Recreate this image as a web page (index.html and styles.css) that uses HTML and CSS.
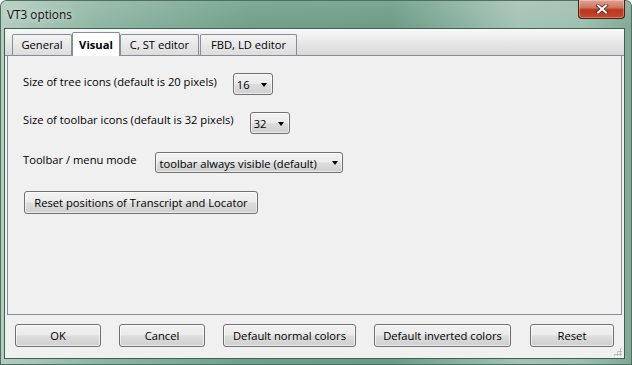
FILE: index.html
```html
<!DOCTYPE html>
<html lang="en">
<head>
    <meta charset="UTF-8">
    <title>VT3 options</title>
    <link rel="stylesheet" href="styles.css">
</head>
<body>
    <div class="window">
        <div class="titlebar">
            <span class="title">VT3 options</span>
            <div class="close">
                <svg width="14" height="10" viewBox="0 0 14 10">
                    <path d="M3 1.5 L11 8.5 M11 1.5 L3 8.5" stroke="#4a2a22" stroke-width="3.6" stroke-linecap="square"/>
                    <path d="M3 1.5 L11 8.5 M11 1.5 L3 8.5" stroke="#ffffff" stroke-width="2" stroke-linecap="square"/>
                </svg>
            </div>
        </div>
        <div class="client">
            <div class="tabstrip">
                <div class="tab tab-general">General</div>
                <div class="tab tab-visual active">Visual</div>
                <div class="tab tab-cst">C, ST editor</div>
                <div class="tab tab-fbd">FBD, LD editor</div>
            </div>
            <div class="panel">
                <div class="row row-tree">
                    <span class="label">Size of tree icons (default is 20 pixels)</span>
                    <div class="combo combo-small"><span>16</span><i class="arrow"></i></div>
                </div>
                <div class="row row-toolbar">
                    <span class="label">Size of toolbar icons (default is 32 pixels)</span>
                    <div class="combo combo-small"><span>32</span><i class="arrow"></i></div>
                </div>
                <div class="row row-mode">
                    <span class="label">Toolbar / menu mode</span>
                    <div class="combo combo-wide"><span>toolbar always visible (default)</span><i class="arrow"></i></div>
                </div>
                <div class="row row-reset">
                    <button class="btn btn-positions">Reset positions of Transcript and Locator</button>
                </div>
            </div>
            <div class="footer">
                <button class="btn btn-ok">OK</button>
                <button class="btn btn-cancel">Cancel</button>
                <button class="btn btn-normal">Default normal colors</button>
                <button class="btn btn-inverted">Default inverted colors</button>
                <button class="btn btn-reset">Reset</button>
                <div class="grip"></div>
            </div>
        </div>
    </div>
</body>
</html>
```

FILE: styles.css
```css
* {
    box-sizing: border-box;
}

html, body {
    margin: 0;
    padding: 0;
    height: 100%;
    overflow: hidden;
}

body {
    font-family: "Open Sans", "Liberation Sans", sans-serif;
    font-size: 11.2px;
    color: #000;
}

.window {
    height: 365px;
    width: 632px;
    padding: 0 7px 6px 4px;
    display: flex;
    flex-direction: column;
    background:
        linear-gradient(180deg, rgba(255, 255, 255, 0.12), rgba(255, 255, 255, 0) 30px),
        linear-gradient(90deg, #b3cdc0 0%, #8fb6a3 15%, #6e9f89 40%, #6a9b85 62%, #a3c3b4 82%, #9dbfae 92%, #7ea895 100%);
    border-radius: 6px 6px 0 0;
    box-shadow: inset 0 0 0 1px #4f6f61;
    position: relative;
}

.titlebar {
    flex: 0 0 28px;
    display: flex;
    align-items: center;
}

.title {
    font-size: 11.8px;
    margin-left: 3px;
    color: #111;
    text-shadow: 0 0 6px rgba(255, 255, 255, 0.8);
}

.close {
    position: absolute;
    top: 0;
    right: 7px;
    width: 47px;
    height: 19px;
    border: 1px solid #4a1d14;
    border-top: none;
    border-radius: 0 0 4px 4px;
    background: linear-gradient(#e2a292 0%, #d07966 40%, #b9361e 55%, #c5482f 100%);
    display: flex;
    align-items: center;
    justify-content: center;
    box-shadow: inset 0 0 0 1px rgba(255, 255, 255, 0.3);
}

.client {
    flex: 1;
    background: #f0f0f0;
    border: 1px solid #41604f;
    padding: 0 2px;
    display: flex;
    flex-direction: column;
    position: relative;
}

.tabstrip {
    flex: 0 0 27px;
    display: flex;
    align-items: flex-end;
    background: linear-gradient(#f8f8f8, #d8d8d8);
    margin: 0 -2px;
    padding-left: 7px;
    border-bottom: 1px solid #898c95;
}

.tab {
    height: 21px;
    border: 1px solid #898c95;
    border-bottom: none;
    border-radius: 2px 2px 0 0;
    background: linear-gradient(#f3f3f3, #dcdcdc);
    padding-top: 2px;
    text-align: center;
    margin-right: 1px;
}

.tab-general { width: 60px; }
.tab-cst { width: 79px; }
.tab-fbd { width: 97px; }

.tab.active {
    width: 48px;
    height: 24px;
    margin-bottom: -1px;
    margin-left: -1px;
    margin-right: 0;
    background: #fff;
    font-weight: bold;
    padding-top: 4px;
}

.panel {
    flex: 0 0 259px;
    border: 1px solid #898c95;
    border-top: none;
    display: flex;
    flex-direction: column;
    padding: 17px 0 0 15px;
}

.row {
    display: flex;
    gap: 16px;
    align-items: flex-start;
}

.label {
    padding-top: 1px;
}

.row-toolbar { margin-top: 17px; }
.row-toolbar .label { padding-top: 0; }
.row-mode { margin-top: 18px; gap: 19px; }
.row-mode .label { padding-top: 0; }
.row-reset { margin-top: 18px; }

.combo {
    height: 22px;
    border: 1px solid #707070;
    border-radius: 3px;
    background: linear-gradient(#f2f2f2 0%, #ebebeb 48%, #dddddd 52%, #cfcfcf 100%);
    display: flex;
    align-items: center;
    justify-content: space-between;
    padding: 1px 5px 0 3px;
    box-shadow: inset 0 0 0 1px rgba(255, 255, 255, 0.6);
}

.combo-small { width: 40px; }
.combo-wide { width: 188px; height: 21px; padding-right: 4px; }

.arrow {
    width: 0;
    height: 0;
    border-left: 3.5px solid transparent;
    border-right: 3.5px solid transparent;
    border-top: 4px solid #000;
}

.btn {
    font-family: inherit;
    font-size: inherit;
    color: #000;
    height: 23px;
    border: 1px solid #707070;
    border-radius: 3px;
    background: linear-gradient(#f2f2f2 0%, #ebebeb 48%, #dddddd 52%, #cfcfcf 100%);
    box-shadow: inset 0 0 0 1px rgba(255, 255, 255, 0.6);
    padding: 0;
    margin: 0;
}

.btn-positions { width: 234px; margin-left: 1px; }

.footer {
    display: flex;
    gap: 18px;
    padding: 9px 0 0 8px;
}

.btn-ok, .btn-cancel { width: 86px; }
.btn-normal { width: 133px; }
.btn-inverted { width: 137px; }
.btn-reset { width: 84px; margin-left: 1px; }

.grip {
    position: absolute;
    right: 2px;
    bottom: 2px;
    width: 9px;
    height: 9px;
    background-image: radial-gradient(circle, #a8a8a8 0.9px, transparent 1.2px);
    background-size: 3px 3px;
    clip-path: polygon(100% 0, 100% 100%, 0 100%);
}
```
